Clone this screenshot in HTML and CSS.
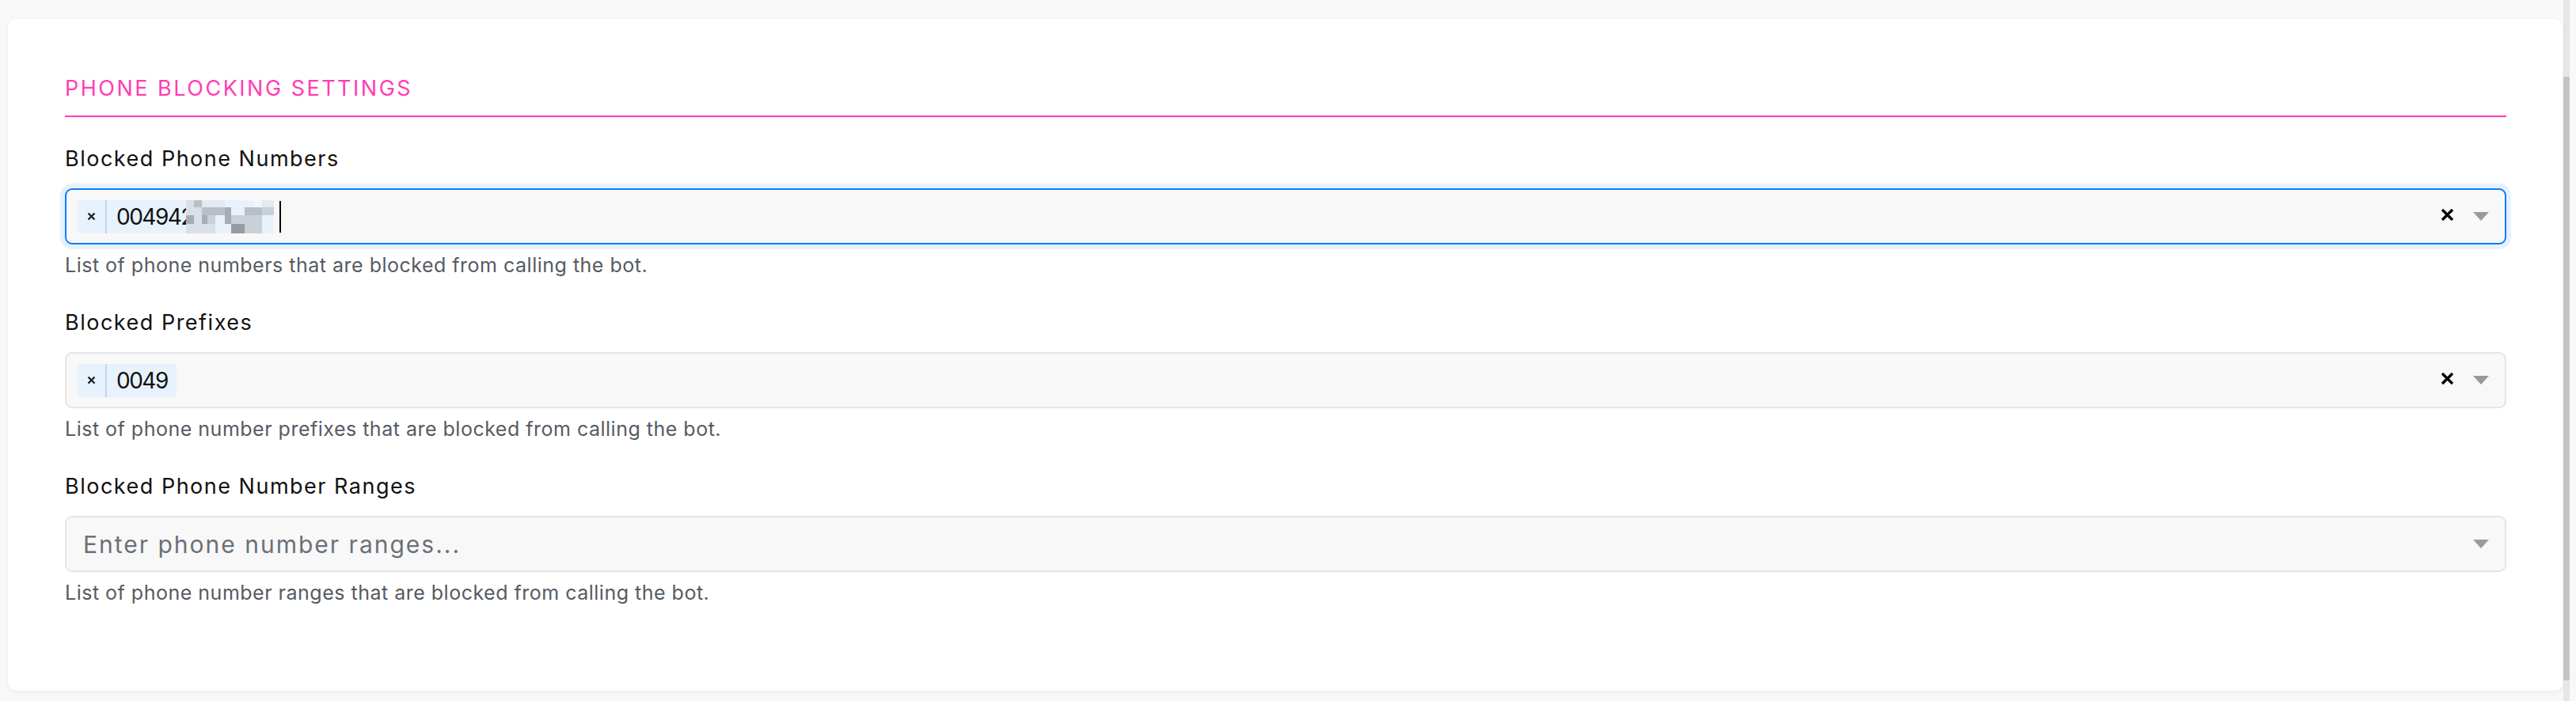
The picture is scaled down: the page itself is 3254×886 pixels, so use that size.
FILE: index.html
```html
<!DOCTYPE html>
<html lang="en">
<head>
    <meta charset="UTF-8">
    <meta name="viewport" content="width=device-width, initial-scale=1.0">
    <title>Phone Blocking Settings</title>
    <link rel="stylesheet" href="styles.css">
</head>
<body>
    <div class="page">
        <main class="card">
            <h2 class="section-title">Phone Blocking Settings</h2>

            <div class="field">
                <label class="field-label">Blocked Phone Numbers</label>
                <div class="select focused">
                    <div class="values">
                        <span class="tag">
                            <span class="tag-remove">
                                <svg width="11" height="11" viewBox="0 0 11 11"><path d="M1.5 1.5L9.5 9.5M9.5 1.5L1.5 9.5" stroke="#222" stroke-width="2.4"/></svg>
                            </span>
                            <span class="tag-label">004942</span>
                            <span class="redacted">
                                <i class="c1"></i><i class="c3"></i><i class="c0"></i><i class="c0"></i><i class="c0"></i><i class="t"></i><i class="t"></i><i class="t"></i><i class="w"></i><i class="c0"></i>
                                <i class="c1"></i><i class="c1"></i><i class="c3"></i><i class="c3"></i><i class="c3"></i><i class="c4"></i><i class="t"></i><i class="c3"></i><i class="c3"></i><i class="c2"></i>
                                <i class="c4"></i><i class="c1"></i><i class="c4"></i><i class="c2"></i><i class="t"></i><i class="c4"></i><i class="c2"></i><i class="c2"></i><i class="c2"></i><i class="t"></i>
                                <i class="c1"></i><i class="c1"></i><i class="c1"></i><i class="c1"></i><i class="t"></i><i class="t"></i><i class="c5"></i><i class="c2"></i><i class="c2"></i><i class="t"></i>
                            </span>
                        </span>
                        <span class="cursor"></span>
                    </div>
                    <div class="indicators">
                        <span class="clear">
                            <svg width="17" height="15" viewBox="0 0 17 15"><path d="M2 1L15 14M15 1L2 14" stroke="#000" stroke-width="3.4"/></svg>
                        </span>
                        <span class="caret"></span>
                    </div>
                </div>
                <p class="hint">List of phone numbers that are blocked from calling the bot.</p>
            </div>

            <div class="field">
                <label class="field-label">Blocked Prefixes</label>
                <div class="select">
                    <div class="values">
                        <span class="tag">
                            <span class="tag-remove">
                                <svg width="11" height="11" viewBox="0 0 11 11"><path d="M1.5 1.5L9.5 9.5M9.5 1.5L1.5 9.5" stroke="#222" stroke-width="2.4"/></svg>
                            </span>
                            <span class="tag-label">0049</span>
                        </span>
                    </div>
                    <div class="indicators">
                        <span class="clear">
                            <svg width="17" height="15" viewBox="0 0 17 15"><path d="M2 1L15 14M15 1L2 14" stroke="#000" stroke-width="3.4"/></svg>
                        </span>
                        <span class="caret"></span>
                    </div>
                </div>
                <p class="hint">List of phone number prefixes that are blocked from calling the bot.</p>
            </div>

            <div class="field">
                <label class="field-label">Blocked Phone Number Ranges</label>
                <div class="select">
                    <div class="values">
                        <span class="placeholder">Enter phone number ranges...</span>
                    </div>
                    <div class="indicators">
                        <span class="caret"></span>
                    </div>
                </div>
                <p class="hint">List of phone number ranges that are blocked from calling the bot.</p>
            </div>
        </main>
        <div class="scrollbar"><div class="thumb"></div></div>
    </div>
</body>
</html>
```

FILE: styles.css
```css
:root {
    --pink: #ff3db5;
    --text: #111;
    --muted: #565b62;
    --input-bg: #f8f8f8;
    --input-border: #e5e5e5;
    --focus: #0b7cfa;
    --tag-bg: #e8f2fd;
}
html, body {
    margin: 0;
    height: 100%;
}
body {
    font-family: 'Inter', sans-serif;
    background-color: #f8f8f8;
    color: var(--text);
}
.page {
    display: flex;
    height: 100%;
    padding-left: 10px;
    box-sizing: border-box;
}
.card {
    flex: 1;
    align-self: flex-start;
    margin-top: 24px;
    padding: 70px 71px 107px 72px;
    background: #fff;
    border-radius: 10px;
    box-shadow: 0 2px 6px rgba(0,0,0,0.06);
}
.section-title {
    margin: 0;
    padding-bottom: 16px;
    border-bottom: 2px solid var(--pink);
    color: var(--pink);
    font-size: 27px;
    line-height: 36px;
    font-weight: 400;
    letter-spacing: 2.5px;
    text-transform: uppercase;
}
.field {
    margin-top: 38px;
}
.field:first-of-type {
    margin-top: 35px;
}
.field-label {
    display: block;
    font-size: 27px;
    line-height: 36px;
    letter-spacing: 1.5px;
    margin-bottom: 19px;
}
.select {
    display: flex;
    align-items: center;
    height: 71px;
    box-sizing: border-box;
    padding: 0 20px 0 14px;
    background: var(--input-bg);
    border: 2px solid var(--input-border);
    border-radius: 9px;
}
.select.focused {
    border-color: var(--focus);
    box-shadow: 0 0 0 6px #e6f1fe;
}
.values {
    flex: 1;
    display: flex;
    align-items: center;
    gap: 7px;
}
.tag {
    display: flex;
    align-items: center;
    height: 42px;
    background: var(--tag-bg);
    border-radius: 4px;
}
.tag-remove {
    display: flex;
    align-items: center;
    justify-content: center;
    width: 37px;
    height: 100%;
    border-right: 2px solid #b8d7f7;
    box-sizing: border-box;
}
.tag-label {
    padding: 0 11px 0 12px;
    font-size: 28px;
    letter-spacing: -1.5px;
}
.redacted {
    display: grid;
    grid-template-columns: 10px 10px 7px 10px 12px 8px 17px 12px 10px 15px;
    grid-template-rows: 9px 10px 11px 12px;
    margin-left: -20px;
    align-self: stretch;
}
.redacted i { display: block; }
.redacted .t { background: var(--tag-bg); }
.redacted .w { background: #f2f7fd; }
.redacted .c0 { background: #e2eaf3; }
.redacted .c1 { background: #d9e0e8; }
.redacted .c2 { background: #c9d0d8; }
.redacted .c3 { background: #b9bfc6; }
.redacted .c4 { background: #a8adb3; }
.redacted .c5 { background: #989ca2; }
.cursor {
    width: 2px;
    height: 40px;
    background: #000;
}
.placeholder {
    padding-left: 7px;
    font-size: 30px;
    letter-spacing: 2px;
    color: #6b7079;
}
.indicators {
    display: flex;
    align-items: center;
    gap: 24px;
}
.clear {
    display: flex;
    margin-top: -5px;
}
.caret {
    width: 0;
    height: 0;
    border-left: 10px solid transparent;
    border-right: 10px solid transparent;
    border-top: 11px solid #9a9a9a;
}
.hint {
    margin: 9px 0 0;
    font-size: 25px;
    line-height: 34px;
    letter-spacing: 0.5px;
    color: var(--muted);
}
.scrollbar {
    display: flex;
    flex-direction: column;
    width: 8px;
    margin: 0 8px 0 1px;
    padding: 97px 0 26px;
    box-sizing: border-box;
    background: #e6e6e6;
}
.thumb {
    flex: 1;
    background: #c4c4c4;
}
```
